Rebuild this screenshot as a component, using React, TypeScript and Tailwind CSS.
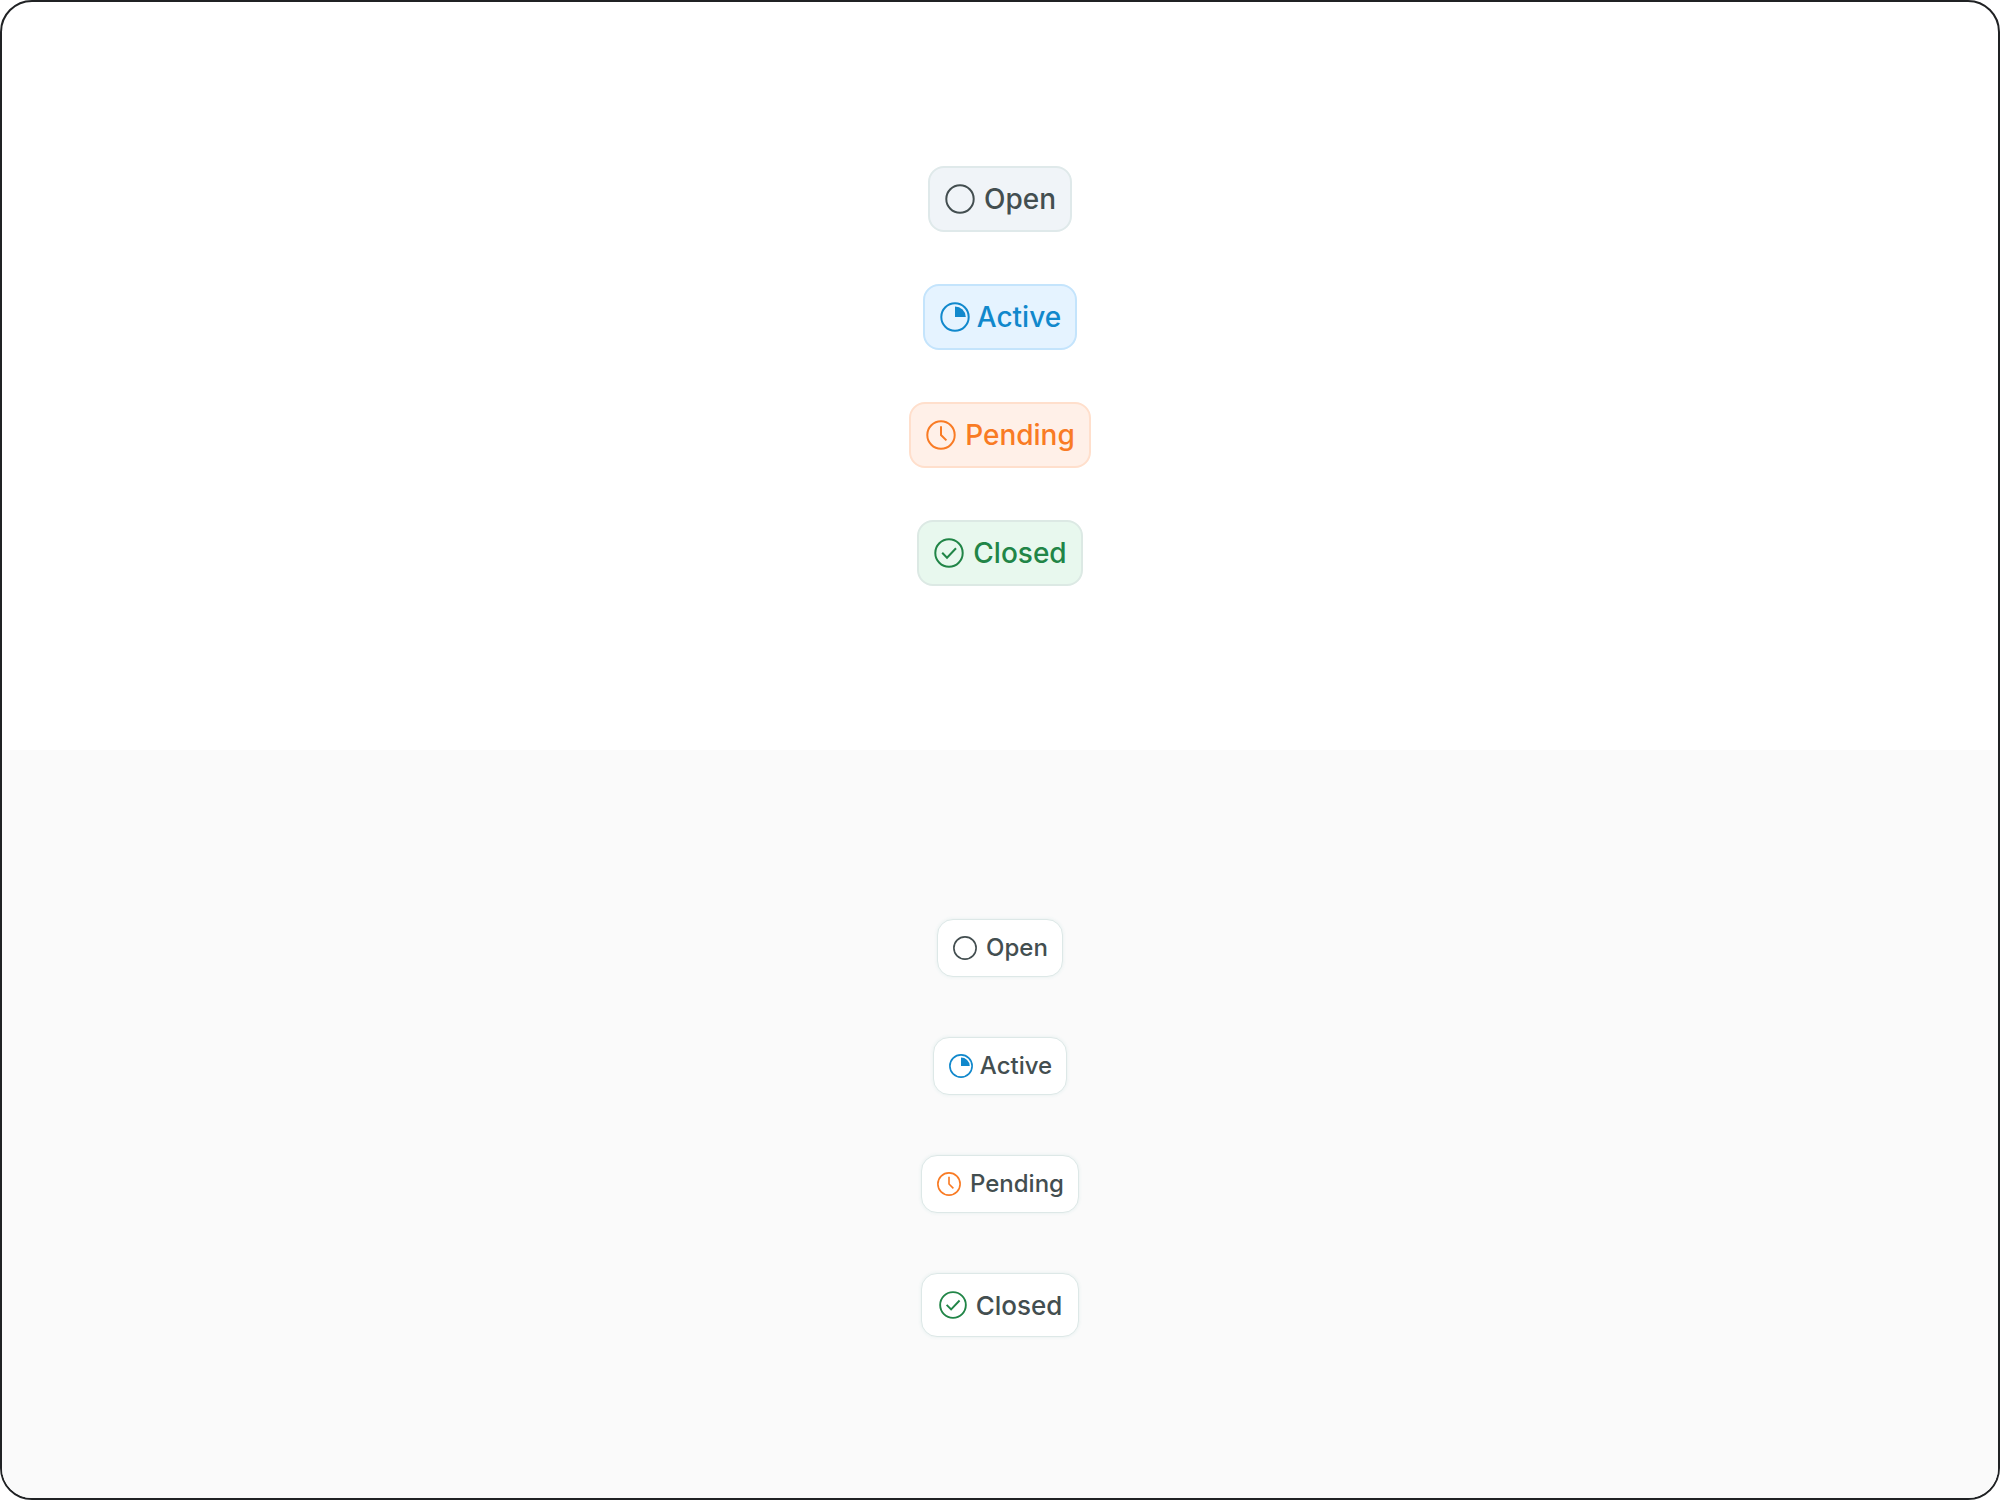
import type { ReactNode } from "react";

type Status = "open" | "active" | "pending" | "closed";

type StatusItem = {
  status: Status;
  label: string;
  gapClassName: string;
  badgeClassName: string;
  iconClassName: string;
};

const statusItems: StatusItem[] = [
  {
    status: "open",
    label: "Open",
    gapClassName: "gap-2",
    badgeClassName: "border-[#dfe9ea] bg-[#f0f4f8] text-[#434e50]",
    iconClassName: "text-[#434e50]",
  },
  {
    status: "active",
    label: "Active",
    gapClassName: "gap-1.5",
    badgeClassName: "border-[#c4e4fc] bg-[#e5f3ff] text-[#1188cc]",
    iconClassName: "text-[#1188cc]",
  },
  {
    status: "pending",
    label: "Pending",
    gapClassName: "gap-2",
    badgeClassName: "border-[#ffdfcc] bg-[#fff0e8] text-[#f97b24]",
    iconClassName: "text-[#f97b24]",
  },
  {
    status: "closed",
    label: "Closed",
    gapClassName: "gap-2",
    badgeClassName: "border-[#dce9e4] bg-[#e8f8ee] text-[#218547]",
    iconClassName: "text-[#218547]",
  },
];

const glyphs: Record<Status, ReactNode> = {
  open: null,
  active: <path d="M16 5.6A10.8 10.8 0 0 1 26.8 16H16Z" fill="currentColor" stroke="none" />,
  pending: <path d="M16 7.2V16l5.4 5.4" />,
  closed: <path d="m9.2 15.8 4.8 5 9-9.6" />,
};

function StatusIcon({ status, className }: { status: Status; className: string }) {
  return (
    <svg
      viewBox="0 0 32 32"
      fill="none"
      stroke="currentColor"
      strokeWidth="2"
      aria-hidden="true"
      className={className}
    >
      <circle cx="16" cy="16" r="13.7" />
      {glyphs[status]}
    </svg>
  );
}

function TintedBadge({ item }: { item: StatusItem }) {
  return (
    <span
      className={`inline-flex h-[66px] items-center rounded-2xl border-2 px-[14px] text-[28px] font-medium ${item.gapClassName} ${item.badgeClassName}`}
    >
      <StatusIcon status={item.status} className="size-8" />
      {item.label}
    </span>
  );
}

function PlainBadge({ item }: { item: StatusItem }) {
  const isLarge = item.status === "closed";

  return (
    <span
      className={[
        "inline-flex items-center rounded-2xl border border-[#dde8e7] bg-white font-medium text-[#434e50] shadow-[0_0_3px_1px_#edf3f3]",
        isLarge ? "h-16 px-4 text-[26px]" : "h-[58px] px-[14px] text-[24px]",
        item.gapClassName,
      ].join(" ")}
    >
      <StatusIcon
        status={item.status}
        className={`${isLarge ? "size-[30px]" : "size-[26px]"} ${item.iconClassName}`}
      />
      {item.label}
    </span>
  );
}

export default function App() {
  return (
    <main className="grid min-h-screen grid-rows-2 overflow-hidden rounded-[32px] border-2 border-[#202224] bg-white font-['Inter',sans-serif]">
      <section className="flex flex-col items-center justify-center gap-[52px]">
        {statusItems.map((item) => (
          <TintedBadge key={item.status} item={item} />
        ))}
      </section>
      <section className="flex flex-col items-center justify-center gap-[60px] bg-[#fafafa] pt-2">
        {statusItems.map((item) => (
          <PlainBadge key={item.status} item={item} />
        ))}
      </section>
    </main>
  );
}
